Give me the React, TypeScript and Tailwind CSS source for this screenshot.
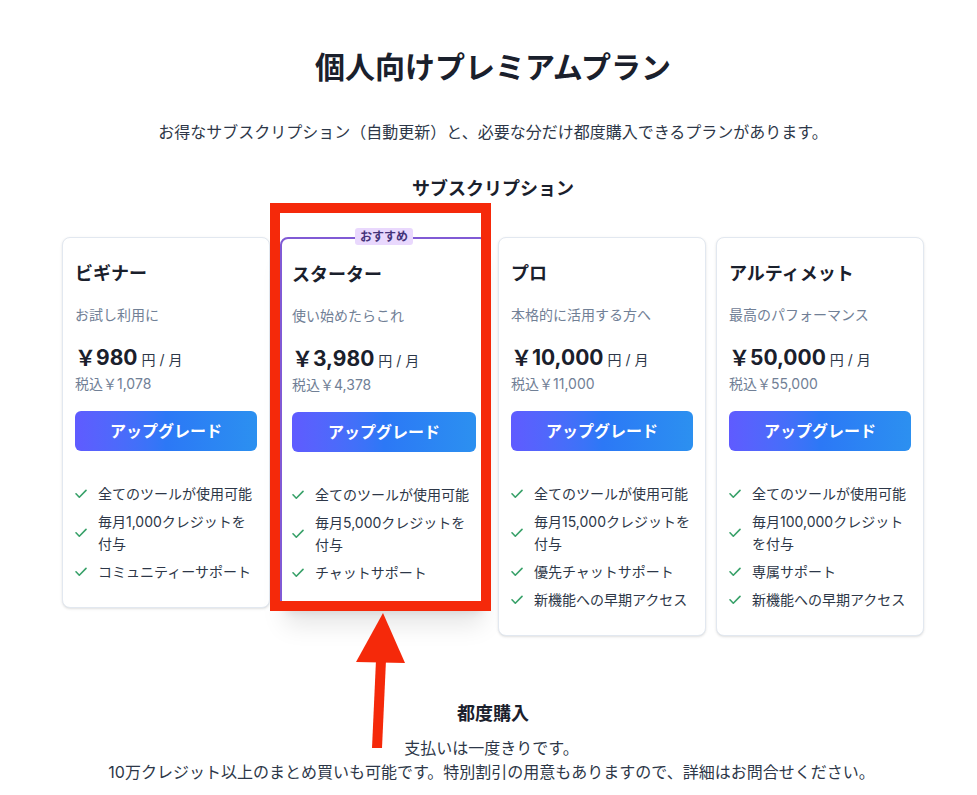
import React from 'react';

type Plan = {
  name: string;
  tagline: string;
  price: string;
  taxIncluded: string;
  features: string[];
  recommended?: boolean;
};

const plans: Plan[] = [
  {
    name: 'ビギナー',
    tagline: 'お試し利用に',
    price: '￥980',
    taxIncluded: '税込￥1,078',
    features: ['全てのツールが使用可能', '毎月1,000クレジットを付与', 'コミュニティーサポート'],
  },
  {
    name: 'スターター',
    tagline: '使い始めたらこれ',
    price: '￥3,980',
    taxIncluded: '税込￥4,378',
    features: ['全てのツールが使用可能', '毎月5,000クレジットを付与', 'チャットサポート'],
    recommended: true,
  },
  {
    name: 'プロ',
    tagline: '本格的に活用する方へ',
    price: '￥10,000',
    taxIncluded: '税込￥11,000',
    features: ['全てのツールが使用可能', '毎月15,000クレジットを付与', '優先チャットサポート', '新機能への早期アクセス'],
  },
  {
    name: 'アルティメット',
    tagline: '最高のパフォーマンス',
    price: '￥50,000',
    taxIncluded: '税込￥55,000',
    features: ['全てのツールが使用可能', '毎月100,000クレジットを付与', '専属サポート', '新機能への早期アクセス'],
  },
];

function CheckMark() {
  return (
    <svg width="12" height="10" viewBox="0 0 12 10" fill="none" className="shrink-0 mr-[11px]">
      <path d="M1 4.8 L4.3 8.2 L11 1.4" stroke="#38a169" strokeWidth="1.6" strokeLinecap="round" strokeLinejoin="round" />
    </svg>
  );
}

function PlanCard({ plan }: { plan: Plan }) {
  const frame = plan.recommended
    ? 'border-2 border-[#805ad5] shadow-xl px-[10px]'
    : 'border border-[#e2e8f0] shadow-sm px-3';

  return (
    <div className={`relative bg-white rounded-lg pt-6 pb-6 ${frame}`}>
      {plan.recommended && (
        <span className="absolute left-1/2 -translate-x-1/2 -top-[11px] bg-[#e9d8fd] text-[#44337a] text-xs font-bold leading-[17px] px-[5px] rounded-[3px]">
          おすすめ
        </span>
      )}
      <h3 className="text-lg font-bold leading-6 text-[#1a202c]">{plan.name}</h3>
      <p className="mt-[19px] text-sm leading-5 text-[#718096]">{plan.tagline}</p>
      <div className="mt-[17px] flex items-baseline h-8">
        <span className="text-[21px] font-bold text-[#1a202c]">{plan.price}</span>
        <span className="ml-1 text-sm text-[#2d3748]">円 / 月</span>
      </div>
      <p className="text-sm leading-5 text-[#718096]">{plan.taxIncluded}</p>
      <button className="mt-[17px] w-full h-10 rounded-md bg-gradient-to-r from-[#5f5bff] via-[#2c78f6] to-[#2c90f0] text-white font-bold text-base">
        アップグレード
      </button>
      <ul className="mt-8 flex flex-col gap-[6px]">
        {plan.features.map((f) => (
          <li key={f} className="flex items-center text-sm leading-[22px] text-[#2d3748]">
            <CheckMark />
            <span>{f}</span>
          </li>
        ))}
      </ul>
    </div>
  );
}

export default function App() {
  return (
    <div
      className="relative min-h-[795px] bg-white overflow-hidden"
      style={{ fontFamily: 'Inter, "Noto Sans CJK JP", sans-serif' }}
    >
      <div className="ml-[62px] w-[862px] pt-[49px] pb-4">
        <h1 className="text-center text-3xl leading-9 font-bold text-[#1a202c]">個人向けプレミアムプラン</h1>
        <p className="mt-[35px] text-center text-base leading-6 text-[#2d3748]">
          お得なサブスクリプション（自動更新）と、必要な分だけ都度購入できるプランがあります。
        </p>
        <h2 className="mt-[31px] text-center text-lg leading-7 font-bold text-[#1a202c]">サブスクリプション</h2>

        <div className="mt-[34px] grid grid-cols-4 gap-[10px] items-start">
          {plans.map((p) => (
            <PlanCard key={p.name} plan={p} />
          ))}
        </div>

        <h2 className="mt-[64px] text-center text-lg leading-7 font-bold text-[#1a202c]">都度購入</h2>
        <p className="mt-[8px] -ml-[3px] text-center text-base leading-6 text-[#2d3748]">
          支払いは一度きりです。
          <br />
          10万クレジット以上のまとめ買いも可能です。特別割引の用意もありますので、詳細はお問合せください。
        </p>
      </div>

      {/* annotation overlay */}
      <div className="absolute left-[270px] top-[203px] w-[221px] h-[408px] border-[10px] border-[#f5290a] pointer-events-none" />
      <svg className="absolute left-0 top-0 pointer-events-none" width="977" height="795" viewBox="0 0 977 795">
        <polygon points="383,613 356,662 405,663" fill="#f5290a" />
        <polygon points="376,660 386,660 382,748 372,748" fill="#f5290a" />
      </svg>
    </div>
  );
}
